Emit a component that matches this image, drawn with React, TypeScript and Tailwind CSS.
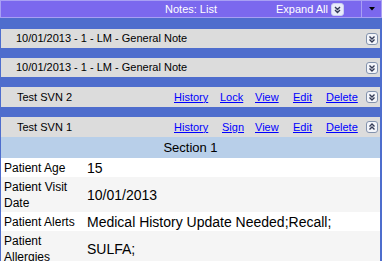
import React from 'react';

function Chevrons({ up = false, size = 12, fill = '#f3f5fa', stroke = '#8393ad' }: { up?: boolean; size?: number; fill?: string; stroke?: string }) {
  const c = size / 2;
  const a = up
    ? `M${c - 2.5} ${c - 0.5} L${c} ${c - 3} L${c + 2.5} ${c - 0.5} M${c - 2.5} ${c + 2.5} L${c} ${c} L${c + 2.5} ${c + 2.5}`
    : `M${c - 2.5} ${c - 2.5} L${c} ${c} L${c + 2.5} ${c - 2.5} M${c - 2.5} ${c + 0.5} L${c} ${c + 3} L${c + 2.5} ${c + 0.5}`;
  return (
    <svg width={size} height={size} viewBox={`0 0 ${size} ${size}`} className="shrink-0">
      <rect x="0.5" y="0.5" width={size - 1} height={size - 1} rx="2.5" fill={fill} stroke={stroke} />
      <path d={a} fill="none" stroke="#333a55" strokeWidth="1.4" />
    </svg>
  );
}

function NoteRow({ title }: { title: string }) {
  return (
    <div className="flex h-[19px] items-center bg-[#dcdcdc] pl-[15px] pr-[2px] text-[11px] text-black">
      <span>{title}</span>
      <span className="ml-auto">
        <Chevrons />
      </span>
    </div>
  );
}

function SvnRow({ title, second, open }: { title: string; second: string; open?: boolean }) {
  const link = 'text-[#0000ff] underline underline-offset-[1px]';
  return (
    <div className="flex h-[20px] items-center bg-[#dcdcdc] pl-[16px] pr-[2px] text-[11px] text-black">
      <span>{title}</span>
      <div className="ml-auto flex items-center">
        <span className="w-[46px]"><a className={link}>History</a></span>
        <span className={second === 'Sign' ? 'w-[35px] pl-[2px]' : 'w-[35px]'}><a className={link}>{second}</a></span>
        <span className="w-[38px]"><a className={link}>View</a></span>
        <span className="w-[33px]"><a className={link}>Edit</a></span>
        <span className="w-[40px]"><a className={link}>Delete</a></span>
        <Chevrons up={open} />
      </div>
    </div>
  );
}

const fields = [
  { label: 'Patient Age', value: '15', tall: false },
  { label: 'Patient Visit Date', value: '10/01/2013', tall: true },
  { label: 'Patient Alerts', value: 'Medical History Update Needed;Recall;', tall: false },
  { label: 'Patient Allergies', value: 'SULFA;', tall: true },
];

export default function App() {
  return (
    <div className="h-[261px] w-[382px] overflow-hidden bg-[#4e6dcd] font-['Liberation_Sans',Arial,sans-serif]">
      {/* Header */}
      <div className="flex h-[18px] items-center border border-[#a89ff4] bg-[#7b68ee] text-[11px] text-white">
        <div className="flex-1" />
        <div>Notes: List</div>
        <div className="flex h-full flex-1 items-center justify-end">
          <span>Expand All</span>
          <span className="ml-[3px] mr-[17px]">
            <Chevrons size={13} fill="#e9ecfa" stroke="#c9cff2" />
          </span>
          <div className="flex h-full w-[20px] items-center justify-center border-l border-[#a89ff4]">
            <svg width="6" height="4" viewBox="0 0 6 4">
              <polygon points="0,0 6,0 3,3.5" fill="#000" />
            </svg>
          </div>
        </div>
      </div>

      <div className="flex flex-col gap-[10px] pl-px pr-[2px] pt-[11px]">
        <NoteRow title="10/01/2013 - 1 - LM - General Note" />
        <NoteRow title="10/01/2013 - 1 - LM - General Note" />
        <SvnRow title="Test SVN 2" second="Lock" />
        <div>
          <SvnRow title="Test SVN 1" second="Sign" open />
          <div className="flex h-[21px] items-center justify-center bg-[#b8cfe9] text-[13px] text-black">
            Section 1
          </div>
          {fields.map((f, i) => (
            <div
              key={f.label}
              className={`flex items-center pb-px pt-[2px] text-black ${i % 2 === 0 ? 'bg-white' : 'bg-[#f5f5f5]'}`}
            >
              <div className="w-[86px] shrink-0 pl-[3px] pr-[6px] text-[12px] leading-[16px]">{f.label}</div>
              <div className="text-[14px] leading-[16px]">{f.value}</div>
            </div>
          ))}
        </div>
      </div>
    </div>
  );
}
